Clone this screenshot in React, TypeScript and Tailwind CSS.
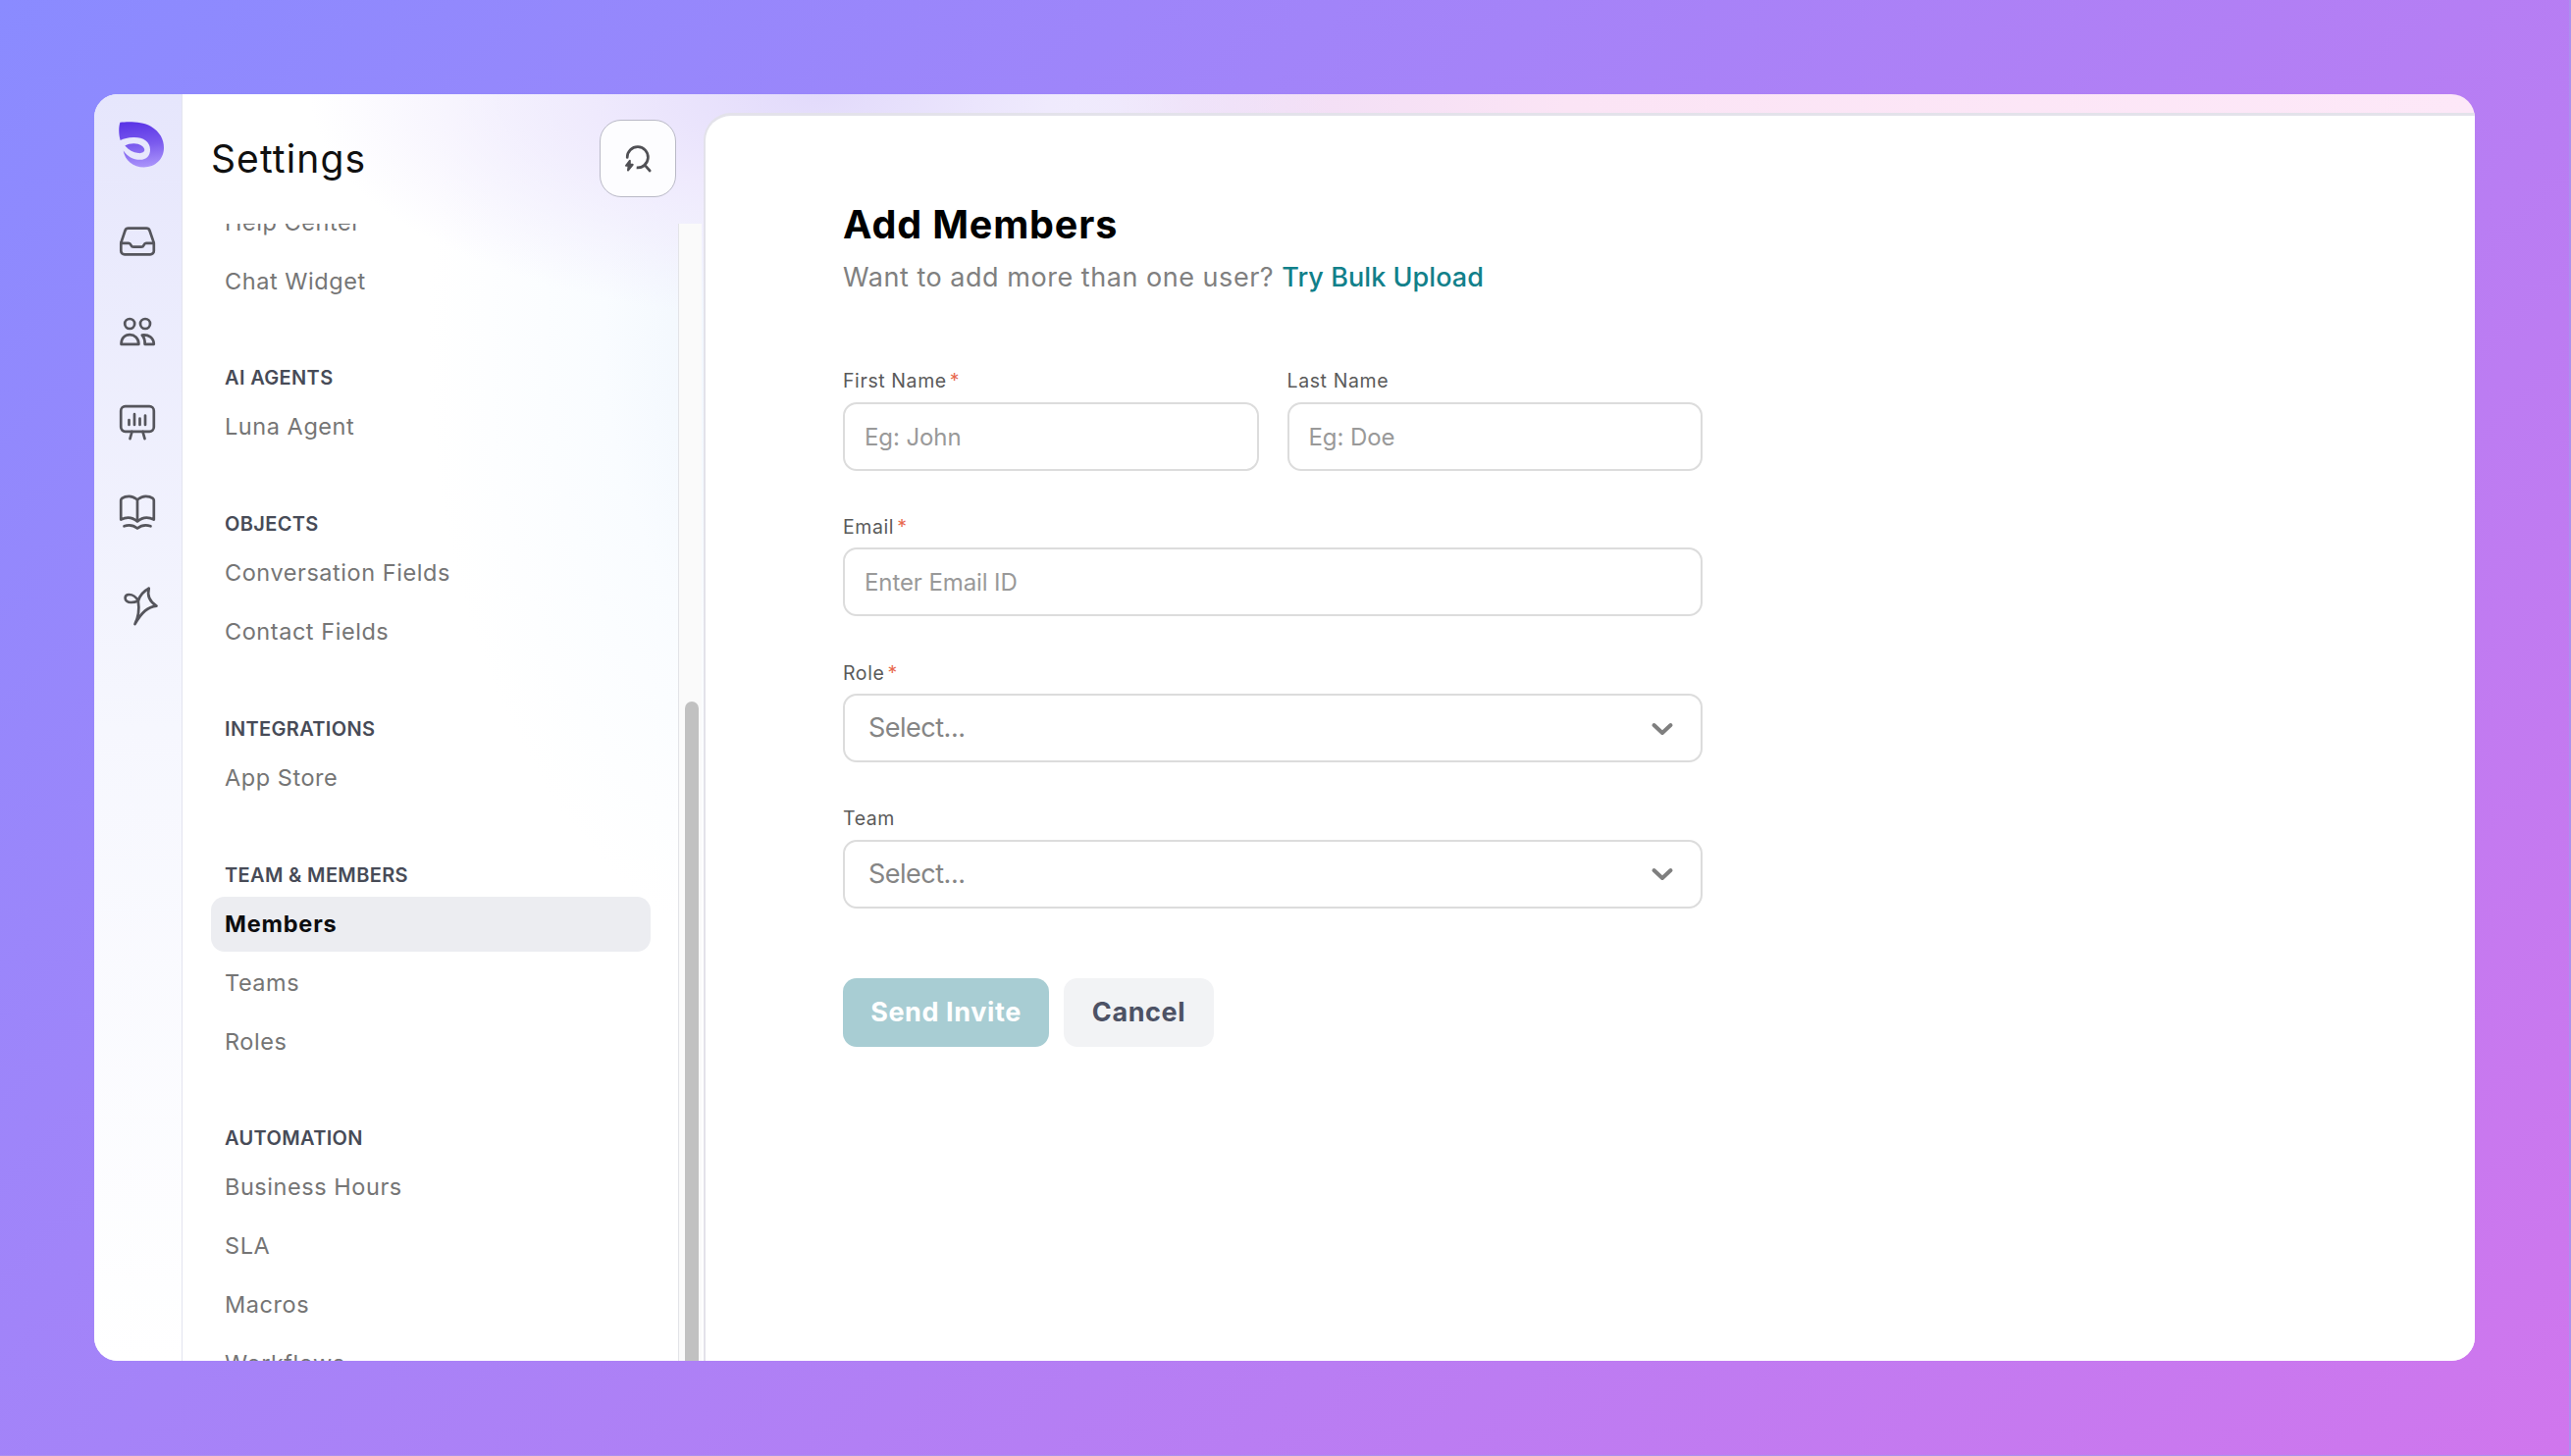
import type { ReactNode } from 'react';
import { clsx } from 'clsx';

interface NavSection {
  title?: string;
  items: string[];
}

const NAV_SECTIONS: NavSection[] = [
  { items: ['Help Center', 'Chat Widget'] },
  { title: 'AI AGENTS', items: ['Luna Agent'] },
  { title: 'OBJECTS', items: ['Conversation Fields', 'Contact Fields'] },
  { title: 'INTEGRATIONS', items: ['App Store'] },
  { title: 'TEAM & MEMBERS', items: ['Members', 'Teams', 'Roles'] },
  { title: 'AUTOMATION', items: ['Business Hours', 'SLA', 'Macros', 'Workflows'] },
];

const ACTIVE_ITEM = 'Members';

function Logo() {
  return (
    <svg viewBox="0 0 138 139" className="h-[46.5px] w-[46px]" aria-hidden="true">
      <defs>
        <linearGradient id="logo-fill" x1="69" y1="0" x2="85" y2="139" gradientUnits="userSpaceOnUse">
          <stop offset="0" stopColor="#5b35e6" />
          <stop offset="0.5" stopColor="#7b5bee" />
          <stop offset="1" stopColor="#ab95fb" />
        </linearGradient>
      </defs>
      <path
        d="M4 2C30-1 72-1 98 14C126 31 138 54 138 80C138 114 112 139 77 139C44 139 19 118 14 88C26 106 44 116 65 116C85 116 96 103 96 85C96 61 74 47 45 48C28 49 16 52 5 57C0 41-1 18 4 2Z"
        fill="url(#logo-fill)"
      />
      <path d="M19 73C30 67 46 64 59 68C72 72 79 79 79 87C78 94 70 97 60 96C43 94 31 86 19 73Z" fill="url(#logo-fill)" />
    </svg>
  );
}

function RailIcon({ children, className }: Readonly<{ children: ReactNode; className?: string }>) {
  return (
    <svg
      viewBox="0 0 40 40"
      className={clsx('size-10 shrink-0', className)}
      fill="none"
      stroke="#55555c"
      strokeWidth="2.7"
      strokeLinecap="round"
      strokeLinejoin="round"
      aria-hidden="true"
    >
      {children}
    </svg>
  );
}

function Rail() {
  return (
    <nav className="flex w-[90px] shrink-0 flex-col items-center border-r border-[#e3e4ef] bg-linear-to-b from-[#e6e6fc] via-[#f6f7fe] via-50% to-white pt-7">
      <div className="ml-1.5">
        <Logo />
      </div>
      <div className="mt-[55px] -ml-px flex flex-col gap-[52px]">
        {/* Inbox */}
        <RailIcon>
          <path d="M10.8 6.7h18.4a3.5 3.5 0 0 1 3.3 2.3l4 11.6c.2.6.3 1 .3 1.7v7.4a3.7 3.7 0 0 1-3.7 3.7H7a3.7 3.7 0 0 1-3.7-3.7v-7.4c0-.6 0-1.1.3-1.7L7.5 9a3.5 3.5 0 0 1 3.3-2.3Z" />
          <path d="M3.4 21.9h7.7c1.6 0 1.9.9 2.4 2 .5 1.2 1.1 1.8 2.5 1.8h8c1.4 0 2-.6 2.5-1.8.5-1.1.8-2 2.4-2h7.7" />
        </RailIcon>
        {/* Contacts */}
        <RailIcon>
          <circle cx="12.2" cy="12" r="5" />
          <circle cx="28" cy="12" r="5" />
          <path d="M3.5 32.8C3.5 26.6 7.200 23.200 12.200 23.200s9.200 3.400 9.200 9.600Z" />
          <path d="M24.800 23.500c6.500-.8 12 2.600 12 9.300H27.600c.3-4-.4-6.500-2.800-9.300Z" />
        </RailIcon>
        {/* Reports */}
        <RailIcon>
          <rect x="3.2" y="4.2" width="33.6" height="25.6" rx="4.5" />
          <path d="M11.5 18v5M17 12.200V23M22.500 16.500V23M28 13.500V23M14.500 30l-2 7.200M25.500 30l2 7.200" />
        </RailIcon>
        {/* Knowledge base */}
        <RailIcon>
          <path d="M20 7.500C17 4.800 14.500 3.800 11.500 3.800c-3 0-5.500.8-7.200 2.100-.8.600-1.100 1.300-1.100 2.300v19.400c5.400-2.900 11.800-2.600 16.800 2 5-4.600 11.400-4.900 16.800-2V8.200c0-1-.3-1.700-1.100-2.300-1.700-1.300-4.200-2.100-7.200-2.100-3 0-5.500 1-8.500 3.700ZM20 7.500v22" />
          <path d="M6.500 34.300c4.700-1.700 9.300-1.200 13.500 2.200 4.200-3.400 8.800-3.900 13.500-2.200" />
        </RailIcon>
        {/* Automations */}
        <RailIcon className="mt-1 translate-x-[3px]">
          <path d="M28.700 1.800C23 4.800 19.500 9 17.800 14.500C16 10.500 12 8 8.500 8C6 8 4.600 9.500 4.600 11.500C4.600 14 7 16 10.500 16C13 16 15.500 15.500 17.800 14.500" />
          <path d="M28.700 1.800C26.800 9 29.500 15 36.500 19.600C27.500 20.500 21.500 26 14.500 38C18.500 30 19 22 17.800 14.500" />
        </RailIcon>
      </div>
    </nav>
  );
}

function SearchButton() {
  return (
    <button
      type="button"
      aria-label="Search"
      className="flex h-[79px] w-[78px] items-center justify-center rounded-[22px] border border-[#b9b9c6] bg-[#fdfdff]"
    >
      <svg viewBox="0 0 30 30" className="size-[30px]" fill="none" stroke="#505055" strokeWidth="2.7" strokeLinecap="round" aria-hidden="true">
        <path d="M4.2 13.4A10.6 10.6 0 1 1 13.7 23.8C17 24.1 20 23.2 22 21.2L27.2 27" />
        <path d="M6.8 16.8 3 21.8h2.6l-.6 4.8 4.7-5.8H6.8Z" fill="#505055" strokeWidth="2" strokeLinejoin="round" />
      </svg>
    </button>
  );
}

function Sidebar() {
  return (
    <aside className="flex w-[531px] shrink-0 flex-col">
      <header className="flex h-[132px] shrink-0 items-start justify-between pt-[26px] pr-7 pl-[29px]">
        <h1 className="text-[39px] leading-[80px] font-normal tracking-[1.1px] text-[#101010]">Settings</h1>
        <SearchButton />
      </header>

      <div className="flex min-h-0 flex-1 overflow-hidden">
        <div className="-mt-[29.5px] flex flex-1 flex-col gap-[49.75px] pr-7 pl-[29px]">
          {NAV_SECTIONS.map((section) => (
            <section key={section.items[0]}>
              {section.title && (
                <h2 className="px-3.5 text-[20px] leading-[43px] font-semibold tracking-[0.35px] text-[#474b57]">
                  {section.title}
                </h2>
              )}
              <ul className="flex flex-col gap-1">
                {section.items.map((item) => (
                  <li
                    key={item}
                    className={clsx(
                      'h-14 rounded-[14px] px-3.5 text-[23.5px] leading-[56px]',
                      item === ACTIVE_ITEM
                        ? 'bg-[#ecedf1] font-bold tracking-[0.8px] text-[#0d0d0f]'
                        : 'tracking-[0.55px] text-[#757575]'
                    )}
                  >
                    <a>{item}</a>
                  </li>
                ))}
              </ul>
            </section>
          ))}
        </div>

        {/* Scrollbar */}
        <div className="w-6 shrink-0 border-l border-[#e3e4e8] bg-[#fafafa] pt-[487px] pl-1.5">
          <div className="h-full w-3.5 rounded-t-full bg-[#c1c1c1]" />
        </div>
        <div className="w-0.5" />
      </div>
    </aside>
  );
}

interface FieldProps {
  label: string;
  required?: boolean;
  children: ReactNode;
}

function Field({ label, required, children }: Readonly<FieldProps>) {
  return (
    <label className="flex flex-1 flex-col gap-[7.5px]">
      <span className="flex h-7 items-center gap-[3px] text-[19.5px] leading-7 tracking-[0.6px] text-[#5a5a5a]">
        {label}
        {required && <span className="text-[#e8694f]">*</span>}
      </span>
      {children}
    </label>
  );
}

function TextInput({ placeholder }: Readonly<{ placeholder: string }>) {
  return (
    <input
      type="text"
      placeholder={placeholder}
      className="h-[70px] w-full rounded-[14px] border-2 border-[#dcdcdc] bg-white px-5 pt-px text-[24px] tracking-[-0.1px] placeholder:text-[#999999]"
    />
  );
}

function SelectInput() {
  return (
    <div className="flex h-[70px] w-full items-center justify-between rounded-[14px] border-2 border-[#dcdcdc] bg-white pt-px pr-[27px] pl-6">
      <span className="text-[27px] tracking-[-0.5px] text-[#858585]">Select...</span>
      <svg viewBox="0 0 24 14" className="h-3.5 w-6" fill="none" stroke="#7f7f7f" strokeWidth="4" strokeLinecap="round" strokeLinejoin="round" aria-hidden="true">
        <path d="m3.5 3 8.5 8 8.5-8" />
      </svg>
    </div>
  );
}

function AddMembers() {
  return (
    <main className="mt-[19px] flex-1 rounded-tl-[28px] border-t-3 border-l-2 border-[#e3e2ea] bg-white pt-[87px] pl-[140px]">
      <h2 className="text-[39.5px] leading-[48px] font-bold tracking-[0.85px] text-black">Add Members</h2>
      <p className="mt-2.5 text-[27px] leading-10 tracking-[0.53px] text-[#808080]">
        Want to add more than one user? <a className="font-medium tracking-[0.05px] text-[#11808a]">Try Bulk Upload</a>
      </p>

      <form className="mt-[71px] flex w-[876px] flex-col gap-[43.25px]">
        <div className="flex gap-[29px]">
          <Field label="First Name" required>
            <TextInput placeholder="Eg: John" />
          </Field>
          <Field label="Last Name">
            <TextInput placeholder="Eg: Doe" />
          </Field>
        </div>
        <Field label="Email" required>
          <TextInput placeholder="Enter Email ID" />
        </Field>
        <Field label="Role" required>
          <SelectInput />
        </Field>
        <Field label="Team">
          <SelectInput />
        </Field>

        <div className="mt-7 flex gap-[15px] text-[27px] font-bold tracking-[0.6px]">
          <button type="button" className="h-[70px] w-[210px] rounded-[14px] bg-[#a8cdd3] text-white">
            Send Invite
          </button>
          <button type="button" className="h-[70px] w-[153px] rounded-[14px] bg-[#f2f3f5] text-[#4d5265]">
            Cancel
          </button>
        </div>
      </form>
    </main>
  );
}

export default function App() {
  return (
    <div className="h-[1484px] w-[2620px] border-r-2 border-b border-[#ab90ee] bg-linear-[135deg] from-[#8a8bff] to-[#d076ed] px-24 pt-24 font-[Inter,sans-serif]">
      <div className="flex h-[1291px] w-[2426px] overflow-hidden rounded-3xl bg-white bg-[radial-gradient(ellipse_520px_230px_at_740px_0px,#e2dafb_0%,#efeafd_45%,transparent_100%),radial-gradient(ellipse_400px_640px_at_740px_250px,#eaf2fc_0%,#f9fcff_55%,transparent_100%),linear-gradient(90deg,transparent_640px,#e9d9f7_900px,#fbe4f5_1500px,#fde8f8_100%)]">
        <Rail />
        <Sidebar />
        <AddMembers />
      </div>
    </div>
  );
}
